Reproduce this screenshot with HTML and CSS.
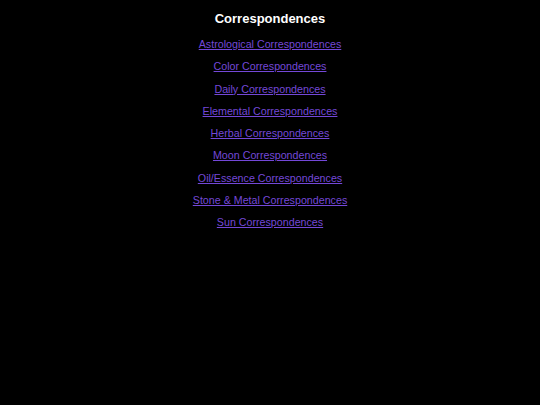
FILE: index.html
```html
<!DOCTYPE html>
<html lang="en">
<head>
    <meta charset="UTF-8">
    <title>Correspondences</title>
    <link rel="stylesheet" href="styles.css">
</head>
<body>
    <h3>Correspondences</h3>
    <ul class="links">
        <li><a href="#">Astrological Correspondences</a></li>
        <li><a href="#">Color Correspondences</a></li>
        <li><a href="#">Daily Correspondences</a></li>
        <li><a href="#">Elemental Correspondences</a></li>
        <li><a href="#">Herbal Correspondences</a></li>
        <li><a href="#">Moon Correspondences</a></li>
        <li><a href="#">Oil/Essence Correspondences</a></li>
        <li><a href="#">Stone &amp; Metal Correspondences</a></li>
        <li><a href="#">Sun Correspondences</a></li>
    </ul>
</body>
</html>
```

FILE: styles.css
```css
body {
    margin: 0;
    padding-top: 10px;
    background-color: #000;
    color: #fff;
    font-family: "Comic Sans MS", "Liberation Sans", sans-serif;
    text-align: center;
}
h3 {
    margin: 0 0 8px 0;
    font-size: 13px;
    line-height: 18px;
}
.links {
    list-style: none;
    margin: 0;
    padding: 0;
}
.links li {
    height: 22.3px;
    line-height: 17px;
    font-size: 10.7px;
}
.links a {
    color: #7448d8;
}
```
